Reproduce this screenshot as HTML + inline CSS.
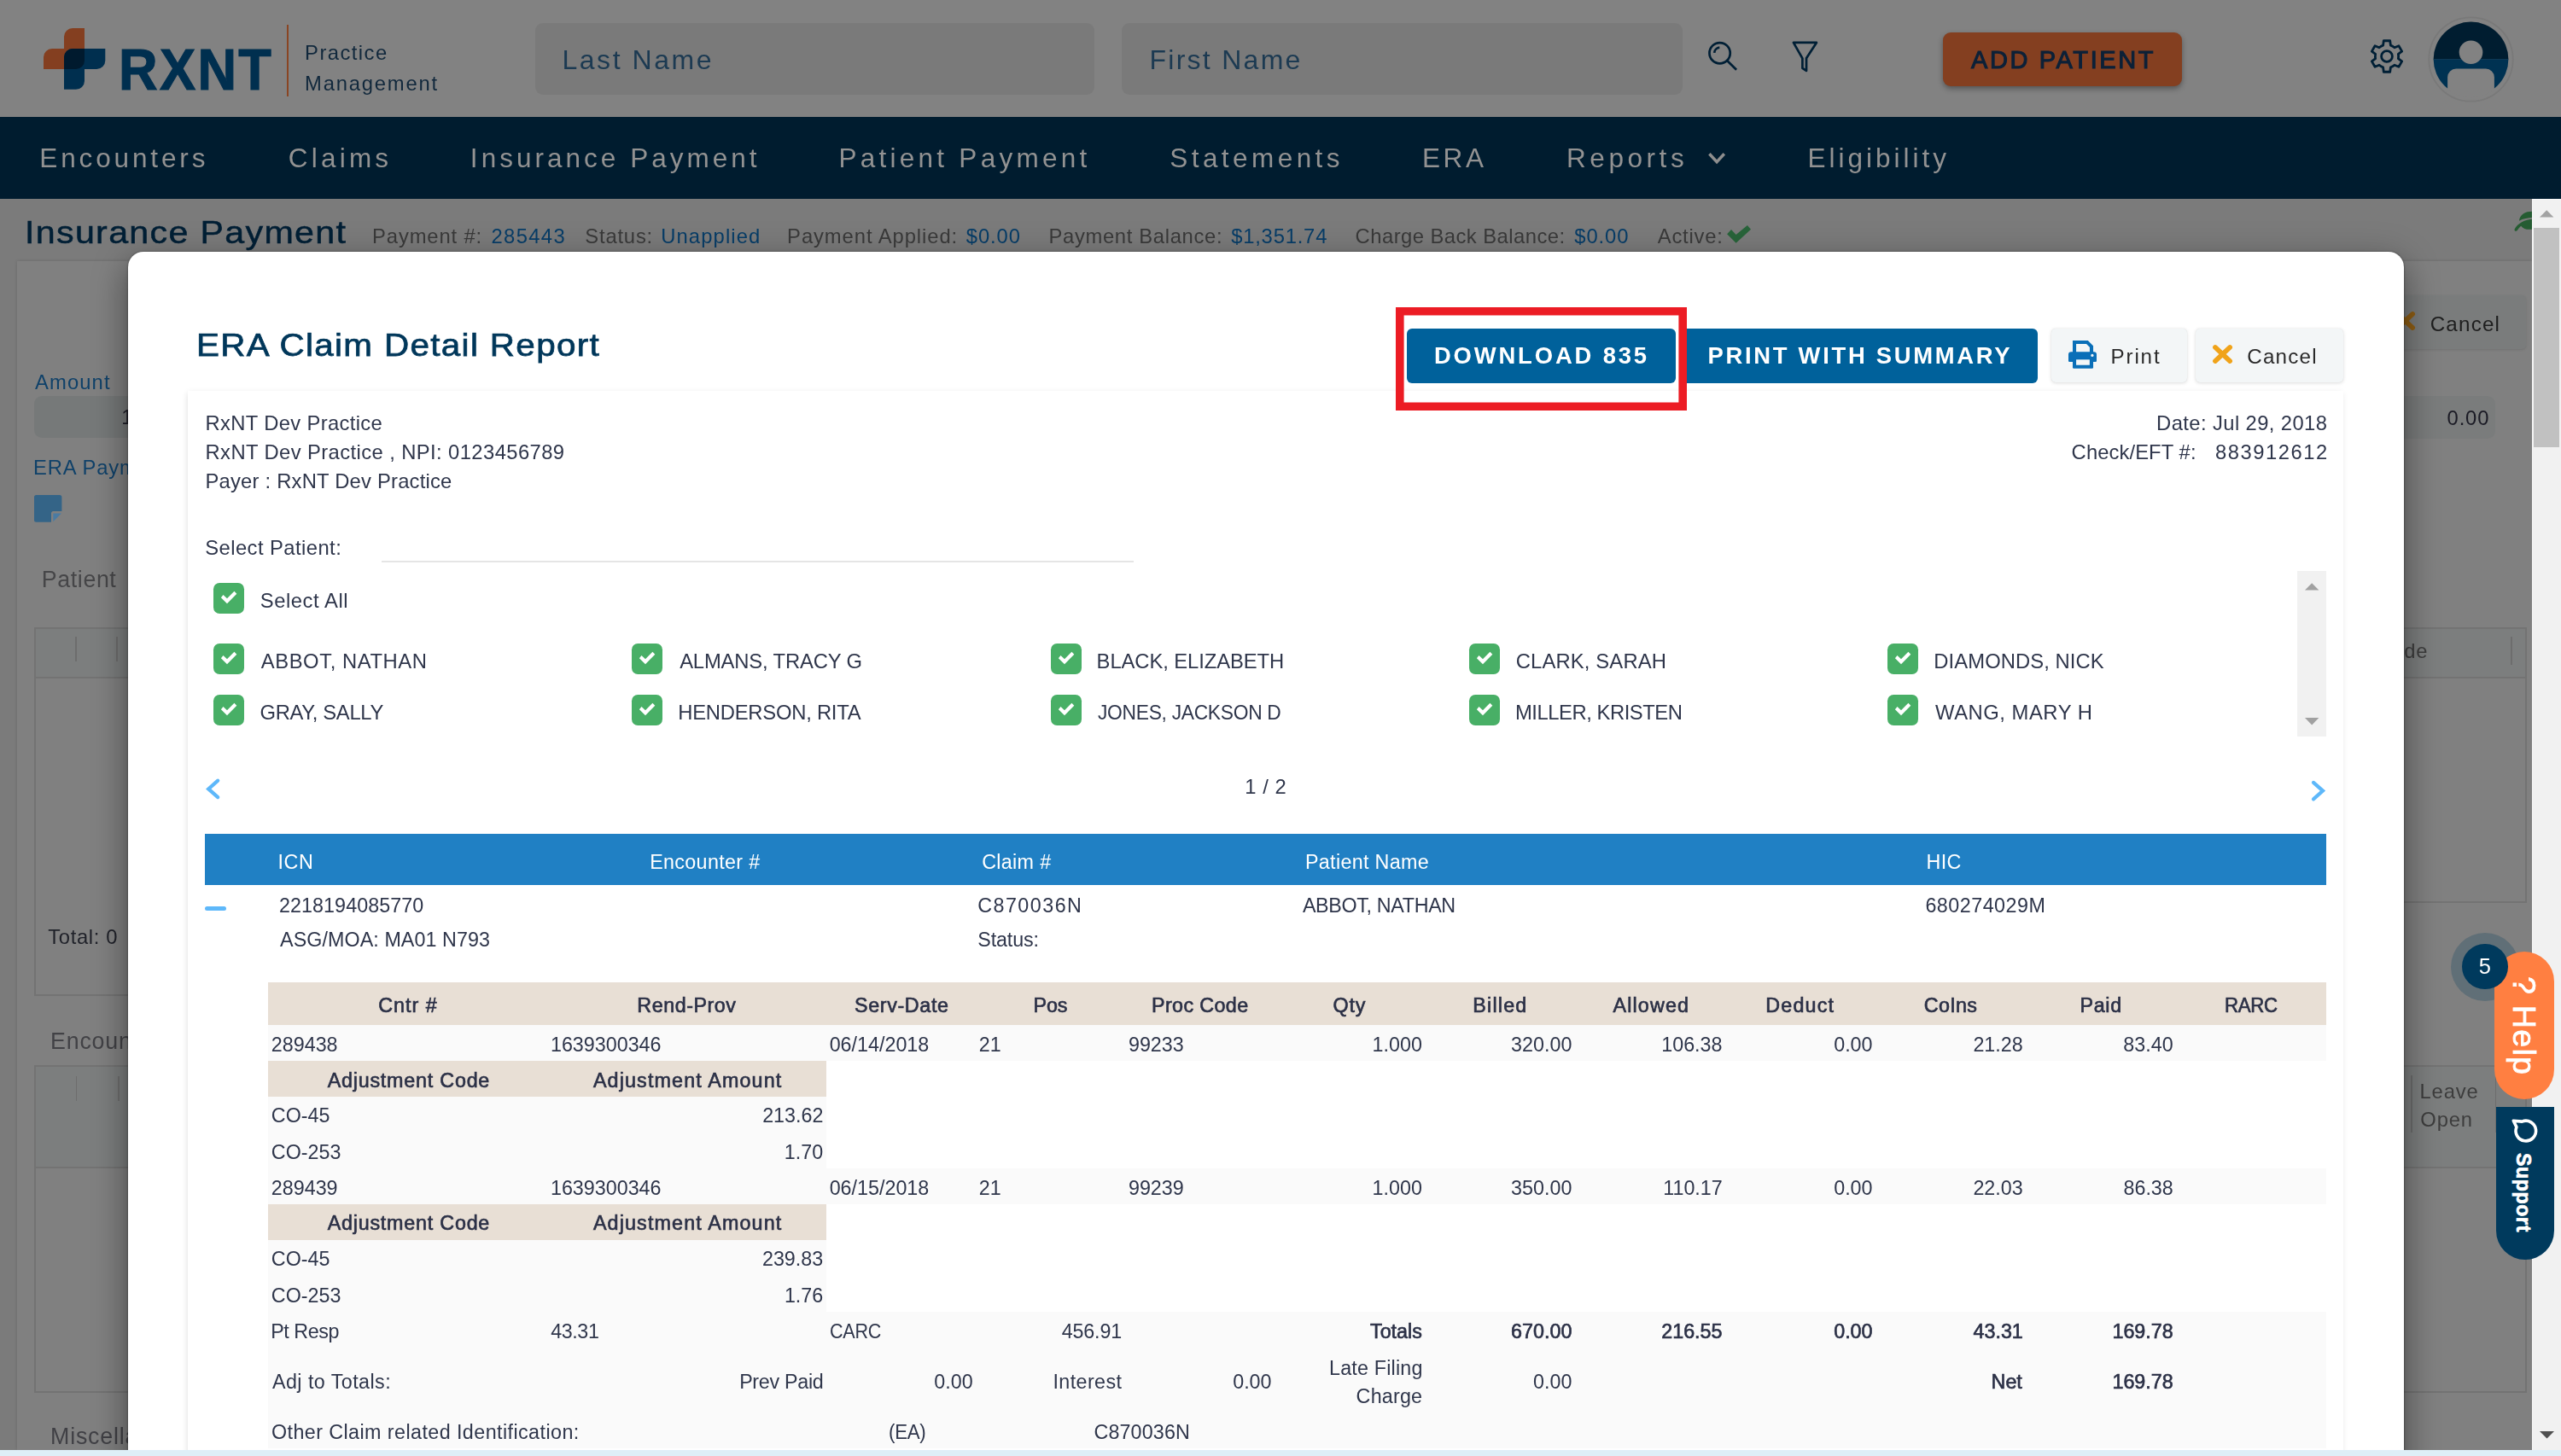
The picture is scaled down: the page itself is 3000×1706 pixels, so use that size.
<!DOCTYPE html>
<html lang="en"><head><meta charset="utf-8"><title>ERA Claim Detail Report</title>
<style>
html,body{margin:0;padding:0}
body{width:3000px;height:1706px;overflow:hidden;position:relative;background:#7d7d7d;font-family:"Liberation Sans",Arial,sans-serif}
.t{position:absolute;white-space:nowrap;display:block}
.r{position:absolute;display:block}
.L{position:absolute;left:0;top:0;width:3000px;height:1706px;will-change:transform;pointer-events:none}
svg{position:absolute;display:block;overflow:visible}
</style></head><body>
<div class="r" style="left:0px;top:0px;width:3000px;height:137px;background:#828282;"></div>
<svg style="left:51px;top:33px" width="73" height="72" viewBox="51 33 73 72">
<path d="M85 33 H99 V71 A10 10 0 0 1 89 81 H51 V67 A10 10 0 0 1 61 57 H75 V43 A10 10 0 0 1 85 33 Z" fill="#843f20"/>
<path d="M85 57 H123.3 V71 A10 10 0 0 1 113.3 81 H99 V95 A10 10 0 0 1 89 104.8 H75 V67 A10 10 0 0 1 85 57 Z" fill="#002f4f"/>
<path d="M85 57 H99 V71 A10 10 0 0 1 89 81 H75 V67 A10 10 0 0 1 85 57 Z" fill="#001a2e"/>
</svg>
<div class="r" style="left:336px;top:29px;width:2.4px;height:84px;background:#8a4523;"></div>
<div class="r" style="left:627px;top:26.5px;width:655px;height:84px;background:#7a7a7a;border-radius:9px;"></div>
<div class="r" style="left:1314px;top:26.5px;width:657px;height:84px;background:#7a7a7a;border-radius:9px;"></div>
<svg style="left:1998px;top:46px" width="42" height="42" viewBox="1998 46 42 42" fill="none" stroke="#001f35" stroke-width="2.7">
<circle cx="2014.6" cy="62.2" r="12.15"/><path d="M2023.4 71.3 L2034.1 81.7"/><path d="M2008.2 61.8 A6.6 6.6 0 0 1 2014.3 55.7"/></svg>
<svg style="left:2096px;top:46px" width="38" height="42" viewBox="2096 46 38 42" fill="none" stroke="#001f35" stroke-width="2.7" stroke-linejoin="round">
<path d="M2100.9 49.9 H2127.9 L2116 68.3 V83 L2111.4 79.8 V68.3 Z"/></svg>
<div class="r" style="left:2276px;top:38px;width:280px;height:62.7px;background:#843f20;border-radius:9px;box-shadow:0 3px 6px rgba(0,0,0,.35);"></div>
<svg style="left:2773px;top:43px" width="46" height="46" viewBox="2773 43 46 46" fill="none" stroke="#001f35" stroke-width="2.8" stroke-linejoin="round"><path d="M2791.59 53.13 L2792.30 47.77 L2799.70 47.77 L2800.41 53.13 A13.60 13.60 0 0 1 2804.94 55.75 L2809.94 53.69 L2813.63 60.09 L2809.35 63.38 A13.60 13.60 0 0 1 2809.35 68.62 L2813.63 71.91 L2809.94 78.31 L2804.94 76.25 A13.60 13.60 0 0 1 2800.41 78.87 L2799.70 84.23 L2792.30 84.23 L2791.59 78.87 A13.60 13.60 0 0 1 2787.06 76.25 L2782.06 78.31 L2778.37 71.91 L2782.65 68.62 A13.60 13.60 0 0 1 2782.65 63.38 L2778.37 60.09 L2782.06 53.69 L2787.06 55.75 A13.60 13.60 0 0 1 2791.59 53.13 Z"/><circle cx="2796" cy="66" r="6.4"/></svg>
<svg style="left:2843.7px;top:18.9px" width="101" height="101" viewBox="-50.5 -50.5 101 101">
<circle cx="0" cy="0" r="49.2" fill="none" stroke="#797979" stroke-width="1.8"/>
<clipPath id="avc"><circle cx="0" cy="0" r="44.7"/></clipPath>
<path d="M-43.9 0 A43.9 43.9 0 0 1 43.9 0 Z" fill="#001d30"/><path d="M-43.9 -0.3 H43.9 A43.9 43.9 0 0 1 -43.9 0 Z" fill="#003252"/>
<g clip-path="url(#avc)"><circle cx="0" cy="-8.3" r="13.8" fill="#828282"/><path d="M-27.4 50 V21 A10 10 0 0 1 -17.4 11 H17.4 A10 10 0 0 1 27.4 21 V50 Z" fill="#828282"/></g></svg>
<div class="r" style="left:0px;top:137px;width:3000px;height:96px;background:#001c2f;"></div>
<svg style="left:1998px;top:174px" width="28" height="24" viewBox="1998 174 28 24" fill="none" stroke="#8e8e8e" stroke-width="3.5"><path d="M2002.4 180.3 L2011.1 189.6 L2019.8 180.3"/></svg>
<div class="r" style="left:0px;top:233px;width:2966px;height:1466px;background:#7b7b7b;"></div>
<div class="r" style="left:20px;top:306px;width:2946px;height:1393px;background:#808080;box-shadow:0 0 4px rgba(0,0,0,.15);"></div>
<svg style="left:2020px;top:260px" width="34" height="28" viewBox="2020 260 34 28"><path d="M2023.1 274.2 L2028 269.1 L2033.6 275 L2046.9 264 L2051 268.7 L2033.6 284.8 Z" fill="#28643a"/></svg>
<svg style="left:2940px;top:244px" width="30" height="30" viewBox="2940 244 30 30" fill="#255c32"><path d="M2968 247.7 C2958 247 2951.5 251.5 2951 258.8 C2955.5 256.2 2961 255.2 2968 254.8 Z"/><path d="M2968 256.4 C2957 257.2 2949.5 261.5 2945.6 268.4 C2945 270.6 2947.6 271.6 2948.9 269.8 C2950 268 2951.3 266.3 2953.1 264.7 C2956 268.6 2961.5 269.6 2968 268.3 Z"/></svg>
<div class="r" style="left:39.8px;top:464px;width:360.2px;height:49.4px;background:#767979;border-radius:9px;"></div>
<svg style="left:39.8px;top:579.7px" width="32.4" height="31.8" viewBox="0 0 32.4 31.8"><path d="M2.5 0 H29.9 A2.5 2.5 0 0 1 32.4 2.5 V19 H22.5 A2.5 2.5 0 0 0 20 21.5 V31.8 H2.5 A2.5 2.5 0 0 1 0 29.3 V2.5 A2.5 2.5 0 0 1 2.5 0 Z" fill="#346487"/><path d="M22.3 21.6 H32 L22.3 31.3 Z" fill="#4a7ba3"/></svg>
<div class="r" style="left:40.3px;top:735px;width:359.7px;height:432.4px;background:transparent;border:2px solid #737373;box-sizing:border-box;"></div>
<div class="r" style="left:40.3px;top:735px;width:359.7px;height:60px;background:#7c7e7e;border:2px solid #737373;box-sizing:border-box;"></div>
<div class="r" style="left:88.4px;top:746px;width:1.6px;height:29px;background:#6d6d6d;"></div>
<div class="r" style="left:136.4px;top:746px;width:1.6px;height:29px;background:#6d6d6d;"></div>
<div class="r" style="left:40.3px;top:1247.8px;width:359.7px;height:384.2px;background:transparent;border:2px solid #737373;box-sizing:border-box;"></div>
<div class="r" style="left:40.3px;top:1247.8px;width:359.7px;height:121px;background:#7c7e7e;border:2px solid #737373;box-sizing:border-box;"></div>
<div class="r" style="left:88.8px;top:1260.7px;width:1.6px;height:28.9px;background:#6d6d6d;"></div>
<div class="r" style="left:138.2px;top:1260.7px;width:1.6px;height:28.9px;background:#6d6d6d;"></div>
<div class="r" style="left:2700px;top:346.4px;width:258.6px;height:62.6px;background:#7a7c7c;border-radius:5px;box-shadow:0 1px 3px rgba(0,0,0,.12);"></div>
<svg style="left:2803.5px;top:363.3px" width="28" height="26" viewBox="0 0 28 26" stroke="#8f5e14" stroke-width="5.6" stroke-linecap="round"><path d="M4.9 4.9 L22.2 21.1 M22.2 4.9 L4.9 21.1"/></svg>
<div class="r" style="left:2500px;top:464.3px;width:423px;height:49.3px;background:#7a7c7c;border-radius:9px;"></div>
<div class="r" style="left:2500px;top:735px;width:459.8px;height:322.6px;background:transparent;border:2px solid #737373;box-sizing:border-box;"></div>
<div class="r" style="left:2500px;top:735px;width:459.8px;height:60px;background:#7c7e7e;border:2px solid #737373;box-sizing:border-box;"></div>
<div class="r" style="left:2941px;top:746px;width:1.6px;height:33px;background:#6d6d6d;"></div>
<div class="r" style="left:2500px;top:1248.4px;width:459.8px;height:383.6px;background:transparent;border:2px solid #737373;box-sizing:border-box;"></div>
<div class="r" style="left:2500px;top:1248.4px;width:459.8px;height:120.4px;background:#7c7e7e;border:2px solid #737373;box-sizing:border-box;"></div>
<div class="r" style="left:2824.3px;top:1259.6px;width:1.6px;height:67.7px;background:#6d6d6d;"></div>
<div class="r" style="left:2922.6px;top:1259.6px;width:1.6px;height:67.7px;background:#6d6d6d;"></div>
<div class="L">
<span class="t" style="left:138.50px;top:47px;font-size:69px;line-height:69px;color:#002f4f;letter-spacing:2.553px;font-weight:700;transform:scaleX(0.9150);transform-origin:0 0;-webkit-text-stroke:1.2px #002f4f;">RXNT</span>
<span class="t" style="left:357.10px;top:50px;font-size:23.8px;line-height:23.8px;color:#11283c;letter-spacing:1.437px;">Practice</span>
<span class="t" style="left:357.10px;top:86px;font-size:23.8px;line-height:23.8px;color:#11283c;letter-spacing:1.794px;">Management</span>
<span class="t" style="left:658.44px;top:54px;font-size:32px;line-height:32px;color:#1c3a52;letter-spacing:2.535px;">Last Name</span>
<span class="t" style="left:1346.44px;top:54px;font-size:32px;line-height:32px;color:#1c3a52;letter-spacing:2.280px;">First Name</span>
<span class="t" style="left:2309.00px;top:56px;font-size:29px;line-height:29px;color:#0c2138;letter-spacing:2.609px;-webkit-text-stroke:1.1px #0c2138;">ADD PATIENT</span>
<span class="t" style="left:46.28px;top:170px;font-size:31.5px;line-height:31.5px;color:#929292;letter-spacing:3.870px;">Encounters</span>
<span class="t" style="left:337.73px;top:170px;font-size:31.5px;line-height:31.5px;color:#929292;letter-spacing:4.229px;">Claims</span>
<span class="t" style="left:550.87px;top:170px;font-size:31.5px;line-height:31.5px;color:#929292;letter-spacing:4.020px;">Insurance Payment</span>
<span class="t" style="left:982.48px;top:170px;font-size:31.5px;line-height:31.5px;color:#929292;letter-spacing:4.259px;">Patient Payment</span>
<span class="t" style="left:1370.28px;top:170px;font-size:31.5px;line-height:31.5px;color:#929292;letter-spacing:4.437px;">Statements</span>
<span class="t" style="left:1665.98px;top:170px;font-size:31.5px;line-height:31.5px;color:#929292;letter-spacing:3.644px;">ERA</span>
<span class="t" style="left:1835.08px;top:170px;font-size:31.5px;line-height:31.5px;color:#929292;letter-spacing:4.545px;">Reports</span>
<span class="t" style="left:2117.48px;top:170px;font-size:31.5px;line-height:31.5px;color:#929292;letter-spacing:3.998px;">Eligibility</span>
<span class="t" style="left:29.19px;top:254px;font-size:37.5px;line-height:37.5px;color:#001f35;letter-spacing:1.168px;transform:scaleX(1.1000);transform-origin:0 0;-webkit-text-stroke:0.5px #001f35;">Insurance Payment</span>
<span class="t" style="left:436.10px;top:265px;font-size:23.8px;line-height:23.8px;color:#3a3a3a;letter-spacing:0.860px;">Payment #:</span>
<span class="t" style="left:575.51px;top:265px;font-size:23.8px;line-height:23.8px;color:#073d68;letter-spacing:1.354px;">285443</span>
<span class="t" style="left:685.33px;top:265px;font-size:23.8px;line-height:23.8px;color:#3a3a3a;letter-spacing:0.799px;">Status:</span>
<span class="t" style="left:774.22px;top:265px;font-size:23.8px;line-height:23.8px;color:#073d68;letter-spacing:1.117px;">Unapplied</span>
<span class="t" style="left:922.10px;top:265px;font-size:23.8px;line-height:23.8px;color:#3a3a3a;letter-spacing:0.925px;">Payment Applied:</span>
<span class="t" style="left:1131.76px;top:265px;font-size:23.8px;line-height:23.8px;color:#073d68;letter-spacing:0.893px;">$0.00</span>
<span class="t" style="left:1228.50px;top:265px;font-size:23.8px;line-height:23.8px;color:#3a3a3a;letter-spacing:0.661px;">Payment Balance:</span>
<span class="t" style="left:1442.16px;top:265px;font-size:23.8px;line-height:23.8px;color:#073d68;letter-spacing:0.793px;">$1,351.74</span>
<span class="t" style="left:1587.61px;top:265px;font-size:23.8px;line-height:23.8px;color:#3a3a3a;letter-spacing:0.459px;">Charge Back Balance:</span>
<span class="t" style="left:1844.36px;top:265px;font-size:23.8px;line-height:23.8px;color:#073d68;letter-spacing:0.893px;">$0.00</span>
<span class="t" style="left:1941.80px;top:265px;font-size:23.8px;line-height:23.8px;color:#3a3a3a;letter-spacing:0.757px;">Active:</span>
<span class="t" style="left:41.00px;top:436px;font-size:23.8px;line-height:23.8px;color:#0f4169;letter-spacing:1.106px;">Amount</span>
<span class="t" style="left:142.22px;top:477px;font-size:23.8px;line-height:23.8px;color:#1b1b25;">1</span>
<span class="t" style="left:39.10px;top:536px;font-size:23.8px;line-height:23.8px;color:#0f4169;letter-spacing:0.800px;">ERA Payment</span>
<span class="t" style="left:48.86px;top:666px;font-size:26.8px;line-height:26.8px;color:#464648;letter-spacing:0.588px;">Patient</span>
<span class="t" style="left:56.32px;top:1086px;font-size:23.8px;line-height:23.8px;color:#1f2129;letter-spacing:0.622px;">Total: 0</span>
<span class="t" style="left:59.06px;top:1207px;font-size:26.8px;line-height:26.8px;color:#424246;letter-spacing:0.800px;">Encounter</span>
<span class="t" style="left:59.06px;top:1670px;font-size:26.8px;line-height:26.8px;color:#404045;letter-spacing:0.800px;">Miscellaneous</span>
<span class="t" style="left:2846.69px;top:368px;font-size:24.2px;line-height:24.2px;color:#1e1e1e;letter-spacing:1.204px;">Cancel</span>
<span class="t" style="left:2866.55px;top:478px;font-size:23.8px;line-height:23.8px;color:#1b1b25;letter-spacing:0.865px;">0.00</span>
<span class="t" style="left:2784.29px;top:751px;font-size:23.8px;line-height:23.8px;color:#3d3d3d;letter-spacing:0.800px;">Code</span>
<span class="t" style="left:2834.50px;top:1267px;font-size:23.8px;line-height:23.8px;color:#3d3d3d;letter-spacing:0.855px;">Leave</span>
<span class="t" style="left:2835.33px;top:1300px;font-size:23.8px;line-height:23.8px;color:#3d3d3d;letter-spacing:0.809px;">Open</span>
</div>
<div class="r" style="left:150px;top:294.5px;width:2666.2px;height:1465.5px;background:#ffffff;border-radius:18px 18px 0 0;box-shadow:0 0 2.5px rgba(0,0,0,.45),0 11px 15px -7px rgba(0,0,0,.3),0 24px 38px 3px rgba(0,0,0,.2),0 9px 40px 6px rgba(0,0,0,.2);"></div>
<div class="r" style="left:220px;top:457.6px;width:2525.4px;height:1302.4px;background:#ffffff;box-shadow:-1.5px 1.5px 7px rgba(0,0,0,.12);"></div>
<div class="r" style="left:1648.1px;top:384.8px;width:315.1px;height:64.1px;background:#00619b;border-radius:6px;"></div>
<div class="r" style="left:1968px;top:384.8px;width:419.3px;height:64.1px;background:#00619b;border-radius:6px;"></div>
<div class="r" style="left:1635.2px;top:360px;width:340.6px;height:120.6px;background:transparent;box-shadow:inset 0 0 0 9.6px #ec1c24;"></div>
<div class="r" style="left:2403.4px;top:385.2px;width:158.3px;height:62.8px;background:#f3f6f7;border-radius:5px;box-shadow:0 1px 4px rgba(0,0,0,.13),0 0 1px rgba(0,0,0,.12);"></div>
<div class="r" style="left:2572.4px;top:385.2px;width:172.8px;height:62.8px;background:#f3f6f7;border-radius:5px;box-shadow:0 1px 4px rgba(0,0,0,.13),0 0 1px rgba(0,0,0,.12);"></div>
<svg style="left:2423px;top:398.9px" width="33" height="33" viewBox="0 0 32.4 32.4"><path d="M0 16.2 A3.2 3.2 0 0 1 3.2 13 H29.2 A3.2 3.2 0 0 1 32.4 16.2 V23.4 A1.2 1.2 0 0 1 31.2 24.6 H1.2 A1.2 1.2 0 0 1 0 23.4 Z" fill="#0a6fb8"/><path d="M6.9 14 V2 H21.6 L26.5 6.9 V14" stroke="#0a6fb8" stroke-width="4" fill="none" stroke-linejoin="miter"/><rect x="4.9" y="21" width="23.6" height="11.2" rx="1.2" fill="#0a6fb8"/><rect x="8.9" y="21.9" width="15.5" height="6.3" fill="#f3f6f7"/><circle cx="27.4" cy="17.1" r="1.6" fill="#f3f6f7"/></svg>
<svg style="left:2590px;top:402px" width="28" height="26" viewBox="0 0 28 26" stroke="#f0a31a" stroke-width="5.6" stroke-linecap="round"><path d="M4.9 4.9 L22.2 21.1 M22.2 4.9 L4.9 21.1"/></svg>
<div class="r" style="left:447.2px;top:657px;width:880.8px;height:2px;background:#e5e5e5;"></div>
<svg style="left:250px;top:683px" width="36" height="36" viewBox="0 0 36 36"><rect width="36" height="36" rx="7.2" fill="#48af66"/><path d="M8.9 17.3 L11.5 14 L16 18.3 L24.4 9.8 L27.3 12.7 L16 24.3 Z" fill="#fff"/></svg>
<svg style="left:250px;top:754px" width="36" height="36" viewBox="0 0 36 36"><rect width="36" height="36" rx="7.2" fill="#48af66"/><path d="M8.9 17.3 L11.5 14 L16 18.3 L24.4 9.8 L27.3 12.7 L16 24.3 Z" fill="#fff"/></svg>
<svg style="left:740.35px;top:754px" width="36" height="36" viewBox="0 0 36 36"><rect width="36" height="36" rx="7.2" fill="#48af66"/><path d="M8.9 17.3 L11.5 14 L16 18.3 L24.4 9.8 L27.3 12.7 L16 24.3 Z" fill="#fff"/></svg>
<svg style="left:1230.7px;top:754px" width="36" height="36" viewBox="0 0 36 36"><rect width="36" height="36" rx="7.2" fill="#48af66"/><path d="M8.9 17.3 L11.5 14 L16 18.3 L24.4 9.8 L27.3 12.7 L16 24.3 Z" fill="#fff"/></svg>
<svg style="left:1721.05px;top:754px" width="36" height="36" viewBox="0 0 36 36"><rect width="36" height="36" rx="7.2" fill="#48af66"/><path d="M8.9 17.3 L11.5 14 L16 18.3 L24.4 9.8 L27.3 12.7 L16 24.3 Z" fill="#fff"/></svg>
<svg style="left:2211.4px;top:754px" width="36" height="36" viewBox="0 0 36 36"><rect width="36" height="36" rx="7.2" fill="#48af66"/><path d="M8.9 17.3 L11.5 14 L16 18.3 L24.4 9.8 L27.3 12.7 L16 24.3 Z" fill="#fff"/></svg>
<svg style="left:250px;top:814px" width="36" height="36" viewBox="0 0 36 36"><rect width="36" height="36" rx="7.2" fill="#48af66"/><path d="M8.9 17.3 L11.5 14 L16 18.3 L24.4 9.8 L27.3 12.7 L16 24.3 Z" fill="#fff"/></svg>
<svg style="left:740.35px;top:814px" width="36" height="36" viewBox="0 0 36 36"><rect width="36" height="36" rx="7.2" fill="#48af66"/><path d="M8.9 17.3 L11.5 14 L16 18.3 L24.4 9.8 L27.3 12.7 L16 24.3 Z" fill="#fff"/></svg>
<svg style="left:1230.7px;top:814px" width="36" height="36" viewBox="0 0 36 36"><rect width="36" height="36" rx="7.2" fill="#48af66"/><path d="M8.9 17.3 L11.5 14 L16 18.3 L24.4 9.8 L27.3 12.7 L16 24.3 Z" fill="#fff"/></svg>
<svg style="left:1721.05px;top:814px" width="36" height="36" viewBox="0 0 36 36"><rect width="36" height="36" rx="7.2" fill="#48af66"/><path d="M8.9 17.3 L11.5 14 L16 18.3 L24.4 9.8 L27.3 12.7 L16 24.3 Z" fill="#fff"/></svg>
<svg style="left:2211.4px;top:814px" width="36" height="36" viewBox="0 0 36 36"><rect width="36" height="36" rx="7.2" fill="#48af66"/><path d="M8.9 17.3 L11.5 14 L16 18.3 L24.4 9.8 L27.3 12.7 L16 24.3 Z" fill="#fff"/></svg>
<div class="r" style="left:2690.8px;top:669px;width:34px;height:193.8px;background:#f1f1f1;"></div>
<svg style="left:2699.8px;top:682.5px" width="16.4" height="8.6" viewBox="0 0 16.4 8.6"><path d="M0 8.6 L8.2 0.2 L16.4 8.6 Z" fill="#a1a1a1"/></svg>
<svg style="left:2699.8px;top:840.8px" width="16.4" height="8.6" viewBox="0 0 16.4 8.6"><path d="M0 0 L8.2 8.4 L16.4 0 Z" fill="#a1a1a1"/></svg>
<svg style="left:236px;top:908px" width="26" height="34" viewBox="236 908 26 34" fill="none" stroke="#5eb8fa" stroke-width="4.2" stroke-linecap="round" stroke-linejoin="miter"><path d="M255.2 914.7 L244.2 924.4 L255.2 934.1"/></svg>
<svg style="left:2702px;top:910px" width="26" height="34" viewBox="2702 910 26 34" fill="none" stroke="#5eb8fa" stroke-width="4.2" stroke-linecap="round" stroke-linejoin="miter"><path d="M2710 916.9 L2721 926.6 L2710 936.3"/></svg>
<div class="r" style="left:240px;top:977px;width:2485px;height:59.8px;background:#2080c4;"></div>
<div class="r" style="left:240.3px;top:1061.6px;width:24.7px;height:5.6px;background:#5eb8fa;border-radius:2.5px;"></div>
<div class="r" style="left:313.7px;top:1151px;width:2411.3px;height:49.9px;background:#e8dfd5;"></div>
<div class="r" style="left:313.7px;top:1200.9px;width:2411.3px;height:42.4px;background:#fafafa;"></div>
<div class="r" style="left:313.7px;top:1243.3px;width:654.5px;height:41.5px;background:#e8dfd5;"></div>
<div class="r" style="left:313.7px;top:1284.8px;width:654.5px;height:84.5px;background:#fafafa;"></div>
<div class="r" style="left:313.7px;top:1369.2px;width:2411.3px;height:42px;background:#fafafa;"></div>
<div class="r" style="left:313.7px;top:1411.2px;width:654.5px;height:41.5px;background:#e8dfd5;"></div>
<div class="r" style="left:313.7px;top:1452.7px;width:654.5px;height:84.5px;background:#fafafa;"></div>
<div class="r" style="left:313.7px;top:1537px;width:2411.3px;height:160.2px;background:#fafafa;"></div>
<div class="L">
<span class="t" style="left:230.37px;top:386px;font-size:37.4px;line-height:37.4px;color:#00375a;letter-spacing:1.248px;transform:scaleX(1.0800);transform-origin:0 0;-webkit-text-stroke:0.75px #00375a;">ERA Claim Detail Report</span>
<span class="t" style="left:1679.92px;top:403px;font-size:27.4px;line-height:27.4px;color:#ffffff;letter-spacing:2.870px;font-weight:700;">DOWNLOAD 835</span>
<span class="t" style="left:2000.52px;top:403px;font-size:27.4px;line-height:27.4px;color:#ffffff;letter-spacing:2.719px;font-weight:700;">PRINT WITH SUMMARY</span>
<span class="t" style="left:2472.56px;top:406px;font-size:24.2px;line-height:24.2px;color:#2a2a2a;letter-spacing:1.832px;">Print</span>
<span class="t" style="left:2632.29px;top:406px;font-size:24.2px;line-height:24.2px;color:#2a2a2a;letter-spacing:1.204px;">Cancel</span>
<span class="t" style="left:240.50px;top:484px;font-size:23.8px;line-height:23.8px;color:#2f364b;letter-spacing:0.341px;">RxNT Dev Practice</span>
<span class="t" style="left:240.50px;top:518px;font-size:23.8px;line-height:23.8px;color:#2f364b;letter-spacing:0.400px;">RxNT Dev Practice , NPI: 0123456789</span>
<span class="t" style="left:240.50px;top:552px;font-size:23.8px;line-height:23.8px;color:#2f364b;letter-spacing:0.206px;">Payer : RxNT Dev Practice</span>
<span class="t" style="left:2526.10px;top:484px;font-size:23.8px;line-height:23.8px;color:#2f364b;letter-spacing:0.395px;">Date: Jul 29, 2018</span>
<span class="t" style="left:2426.61px;top:518px;font-size:23.8px;line-height:23.8px;color:#2f364b;letter-spacing:0.081px;">Check/EFT #:</span>
<span class="t" style="left:2594.93px;top:518px;font-size:23.8px;line-height:23.8px;color:#2f364b;letter-spacing:1.518px;">883912612</span>
<span class="t" style="left:240.23px;top:630px;font-size:23.8px;line-height:23.8px;color:#2f364b;letter-spacing:0.437px;">Select Patient:</span>
<span class="t" style="left:304.73px;top:692px;font-size:23.8px;line-height:23.8px;color:#2f364b;letter-spacing:0.556px;">Select All</span>
<span class="t" style="left:305.80px;top:763px;font-size:23.8px;line-height:23.8px;color:#2f364b;letter-spacing:0.566px;">ABBOT, NATHAN</span>
<span class="t" style="left:796.15px;top:763px;font-size:23.8px;line-height:23.8px;color:#2f364b;letter-spacing:-0.151px;">ALMANS, TRACY G</span>
<span class="t" style="left:1284.60px;top:763px;font-size:23.8px;line-height:23.8px;color:#2f364b;letter-spacing:-0.084px;">BLACK, ELIZABETH</span>
<span class="t" style="left:1775.66px;top:763px;font-size:23.8px;line-height:23.8px;color:#2f364b;letter-spacing:0.156px;">CLARK, SARAH</span>
<span class="t" style="left:2265.30px;top:763px;font-size:23.8px;line-height:23.8px;color:#2f364b;letter-spacing:0.084px;">DIAMONDS, NICK</span>
<span class="t" style="left:304.61px;top:823px;font-size:23.8px;line-height:23.8px;color:#2f364b;letter-spacing:-0.349px;">GRAY, SALLY</span>
<span class="t" style="left:794.25px;top:823px;font-size:23.8px;line-height:23.8px;color:#2f364b;letter-spacing:-0.239px;">HENDERSON, RITA</span>
<span class="t" style="left:1286.16px;top:823px;font-size:23.8px;line-height:23.8px;color:#2f364b;letter-spacing:-0.300px;transform:scaleX(0.9579);transform-origin:0 0;">JONES, JACKSON D</span>
<span class="t" style="left:1774.95px;top:823px;font-size:23.8px;line-height:23.8px;color:#2f364b;letter-spacing:-0.449px;">MILLER, KRISTEN</span>
<span class="t" style="left:2267.08px;top:823px;font-size:23.8px;line-height:23.8px;color:#2f364b;letter-spacing:0.527px;">WANG, MARY H</span>
<span class="t" style="left:1458.21px;top:910px;font-size:23.8px;line-height:23.8px;color:#2f364b;letter-spacing:0.571px;">1 / 2</span>
<span class="t" style="left:325.50px;top:999px;font-size:23.3px;line-height:23.3px;color:#ffffff;letter-spacing:0.592px;">ICN</span>
<span class="t" style="left:761.14px;top:999px;font-size:23.3px;line-height:23.3px;color:#ffffff;letter-spacing:0.339px;">Encounter #</span>
<span class="t" style="left:1150.13px;top:999px;font-size:23.3px;line-height:23.3px;color:#ffffff;letter-spacing:0.332px;">Claim #</span>
<span class="t" style="left:1528.94px;top:999px;font-size:23.3px;line-height:23.3px;color:#ffffff;letter-spacing:0.329px;">Patient Name</span>
<span class="t" style="left:2256.44px;top:999px;font-size:23.3px;line-height:23.3px;color:#ffffff;letter-spacing:0.402px;">HIC</span>
<span class="t" style="left:326.94px;top:1050px;font-size:23.3px;line-height:23.3px;color:#2f364b;letter-spacing:0.077px;">2218194085770</span>
<span class="t" style="left:328.10px;top:1090px;font-size:23.3px;line-height:23.3px;color:#2f364b;letter-spacing:0.069px;">ASG/MOA: MA01 N793</span>
<span class="t" style="left:1145.24px;top:1050px;font-size:23.3px;line-height:23.3px;color:#2f364b;letter-spacing:1.465px;">C870036N</span>
<span class="t" style="left:1145.35px;top:1090px;font-size:23.3px;line-height:23.3px;color:#2f364b;letter-spacing:-0.153px;">Status:</span>
<span class="t" style="left:1525.90px;top:1050px;font-size:23.3px;line-height:23.3px;color:#2f364b;letter-spacing:-0.342px;">ABBOT, NATHAN</span>
<span class="t" style="left:2255.43px;top:1050px;font-size:23.3px;line-height:23.3px;color:#2f364b;letter-spacing:0.486px;">680274029M</span>
<span class="t" style="left:443.23px;top:1167px;font-size:23.3px;line-height:23.3px;color:#2b3046;letter-spacing:1.021px;-webkit-text-stroke:0.65px #2b3046;">Cntr #</span>
<span class="t" style="left:746.34px;top:1167px;font-size:23.3px;line-height:23.3px;color:#2b3046;letter-spacing:0.526px;-webkit-text-stroke:0.65px #2b3046;">Rend-Prov</span>
<span class="t" style="left:1001.05px;top:1167px;font-size:23.3px;line-height:23.3px;color:#2b3046;letter-spacing:0.631px;-webkit-text-stroke:0.65px #2b3046;">Serv-Date</span>
<span class="t" style="left:1210.54px;top:1167px;font-size:23.3px;line-height:23.3px;color:#2b3046;letter-spacing:-0.157px;-webkit-text-stroke:0.65px #2b3046;">Pos</span>
<span class="t" style="left:1348.99px;top:1167px;font-size:23.3px;line-height:23.3px;color:#2b3046;letter-spacing:0.390px;-webkit-text-stroke:0.65px #2b3046;">Proc Code</span>
<span class="t" style="left:1561.45px;top:1167px;font-size:23.3px;line-height:23.3px;color:#2b3046;letter-spacing:0.909px;-webkit-text-stroke:0.65px #2b3046;">Qty</span>
<span class="t" style="left:1725.34px;top:1167px;font-size:23.3px;line-height:23.3px;color:#2b3046;letter-spacing:1.202px;-webkit-text-stroke:0.65px #2b3046;">Billed</span>
<span class="t" style="left:1889.50px;top:1167px;font-size:23.3px;line-height:23.3px;color:#2b3046;letter-spacing:1.161px;-webkit-text-stroke:0.65px #2b3046;">Allowed</span>
<span class="t" style="left:2068.24px;top:1167px;font-size:23.3px;line-height:23.3px;color:#2b3046;letter-spacing:1.207px;-webkit-text-stroke:0.65px #2b3046;">Deduct</span>
<span class="t" style="left:2253.84px;top:1167px;font-size:23.3px;line-height:23.3px;color:#2b3046;letter-spacing:0.292px;-webkit-text-stroke:0.65px #2b3046;">CoIns</span>
<span class="t" style="left:2436.49px;top:1167px;font-size:23.3px;line-height:23.3px;color:#2b3046;letter-spacing:0.693px;-webkit-text-stroke:0.65px #2b3046;">Paid</span>
<span class="t" style="left:2605.97px;top:1167px;font-size:23.3px;line-height:23.3px;color:#2b3046;letter-spacing:-0.300px;transform:scaleX(0.9541);transform-origin:0 0;-webkit-text-stroke:0.65px #2b3046;">RARC</span>
<span class="t" style="left:317.83px;top:1213px;font-size:23.3px;line-height:23.3px;color:#2f364b;">289438</span>
<span class="t" style="left:644.95px;top:1213px;font-size:23.3px;line-height:23.3px;color:#2f364b;">1639300346</span>
<span class="t" style="left:971.67px;top:1213px;font-size:23.3px;line-height:23.3px;color:#2f364b;">06/14/2018</span>
<span class="t" style="left:1146.84px;top:1213px;font-size:23.3px;line-height:23.3px;color:#2f364b;">21</span>
<span class="t" style="left:1321.95px;top:1213px;font-size:23.3px;line-height:23.3px;color:#2f364b;">99233</span>
<span class="t" style="left:1607.57px;top:1213px;font-size:23.3px;line-height:23.3px;color:#2f364b;">1.000</span>
<span class="t" style="left:1770.12px;top:1213px;font-size:23.3px;line-height:23.3px;color:#2f364b;">320.00</span>
<span class="t" style="left:1946.23px;top:1213px;font-size:23.3px;line-height:23.3px;color:#2f364b;">106.38</span>
<span class="t" style="left:2148.20px;top:1213px;font-size:23.3px;line-height:23.3px;color:#2f364b;">0.00</span>
<span class="t" style="left:2311.38px;top:1213px;font-size:23.3px;line-height:23.3px;color:#2f364b;">21.28</span>
<span class="t" style="left:2487.37px;top:1213px;font-size:23.3px;line-height:23.3px;color:#2f364b;">83.40</span>
<span class="t" style="left:383.70px;top:1255px;font-size:23.3px;line-height:23.3px;color:#2b3046;letter-spacing:0.781px;-webkit-text-stroke:0.65px #2b3046;">Adjustment Code</span>
<span class="t" style="left:694.90px;top:1255px;font-size:23.3px;line-height:23.3px;color:#2b3046;letter-spacing:1.144px;-webkit-text-stroke:0.65px #2b3046;">Adjustment Amount</span>
<span class="t" style="left:317.83px;top:1296px;font-size:23.3px;line-height:23.3px;color:#2f364b;">CO-45</span>
<span class="t" style="left:893.17px;top:1296px;font-size:23.3px;line-height:23.3px;color:#2f364b;">213.62</span>
<span class="t" style="left:317.83px;top:1339px;font-size:23.3px;line-height:23.3px;color:#2f364b;">CO-253</span>
<span class="t" style="left:918.80px;top:1339px;font-size:23.3px;line-height:23.3px;color:#2f364b;">1.70</span>
<span class="t" style="left:317.83px;top:1381px;font-size:23.3px;line-height:23.3px;color:#2f364b;">289439</span>
<span class="t" style="left:644.95px;top:1381px;font-size:23.3px;line-height:23.3px;color:#2f364b;">1639300346</span>
<span class="t" style="left:971.67px;top:1381px;font-size:23.3px;line-height:23.3px;color:#2f364b;">06/15/2018</span>
<span class="t" style="left:1146.84px;top:1381px;font-size:23.3px;line-height:23.3px;color:#2f364b;">21</span>
<span class="t" style="left:1321.95px;top:1381px;font-size:23.3px;line-height:23.3px;color:#2f364b;">99239</span>
<span class="t" style="left:1607.57px;top:1381px;font-size:23.3px;line-height:23.3px;color:#2f364b;">1.000</span>
<span class="t" style="left:1770.12px;top:1381px;font-size:23.3px;line-height:23.3px;color:#2f364b;">350.00</span>
<span class="t" style="left:1948.21px;top:1381px;font-size:23.3px;line-height:23.3px;color:#2f364b;">110.17</span>
<span class="t" style="left:2148.20px;top:1381px;font-size:23.3px;line-height:23.3px;color:#2f364b;">0.00</span>
<span class="t" style="left:2311.38px;top:1381px;font-size:23.3px;line-height:23.3px;color:#2f364b;">22.03</span>
<span class="t" style="left:2487.48px;top:1381px;font-size:23.3px;line-height:23.3px;color:#2f364b;">86.38</span>
<span class="t" style="left:383.70px;top:1422px;font-size:23.3px;line-height:23.3px;color:#2b3046;letter-spacing:0.781px;-webkit-text-stroke:0.65px #2b3046;">Adjustment Code</span>
<span class="t" style="left:694.90px;top:1422px;font-size:23.3px;line-height:23.3px;color:#2b3046;letter-spacing:1.144px;-webkit-text-stroke:0.65px #2b3046;">Adjustment Amount</span>
<span class="t" style="left:317.83px;top:1464px;font-size:23.3px;line-height:23.3px;color:#2f364b;">CO-45</span>
<span class="t" style="left:892.93px;top:1464px;font-size:23.3px;line-height:23.3px;color:#2f364b;">239.83</span>
<span class="t" style="left:317.83px;top:1507px;font-size:23.3px;line-height:23.3px;color:#2f364b;">CO-253</span>
<span class="t" style="left:918.91px;top:1507px;font-size:23.3px;line-height:23.3px;color:#2f364b;">1.76</span>
<span class="t" style="left:317.14px;top:1549px;font-size:23.3px;line-height:23.3px;color:#2f364b;letter-spacing:-0.423px;">Pt Resp</span>
<span class="t" style="left:645.13px;top:1549px;font-size:23.3px;line-height:23.3px;color:#2f364b;letter-spacing:-0.384px;">43.31</span>
<span class="t" style="left:971.52px;top:1549px;font-size:23.3px;line-height:23.3px;color:#2f364b;letter-spacing:-0.300px;transform:scaleX(0.9261);transform-origin:0 0;">CARC</span>
<span class="t" style="left:1243.73px;top:1549px;font-size:23.3px;line-height:23.3px;color:#2f364b;letter-spacing:-0.157px;">456.91</span>
<span class="t" style="left:1605.00px;top:1549px;font-size:23.3px;line-height:23.3px;color:#2b3046;-webkit-text-stroke:0.65px #2b3046;">Totals</span>
<span class="t" style="left:1770.12px;top:1549px;font-size:23.3px;line-height:23.3px;color:#2b3046;-webkit-text-stroke:0.65px #2b3046;">670.00</span>
<span class="t" style="left:1946.23px;top:1549px;font-size:23.3px;line-height:23.3px;color:#2b3046;-webkit-text-stroke:0.65px #2b3046;">216.55</span>
<span class="t" style="left:2148.20px;top:1549px;font-size:23.3px;line-height:23.3px;color:#2b3046;-webkit-text-stroke:0.65px #2b3046;">0.00</span>
<span class="t" style="left:2311.50px;top:1549px;font-size:23.3px;line-height:23.3px;color:#2b3046;-webkit-text-stroke:0.65px #2b3046;">43.31</span>
<span class="t" style="left:2474.43px;top:1549px;font-size:23.3px;line-height:23.3px;color:#2b3046;-webkit-text-stroke:0.65px #2b3046;">169.78</span>
<span class="t" style="left:319.00px;top:1608px;font-size:23.3px;line-height:23.3px;color:#2f364b;letter-spacing:0.436px;">Adj to Totals:</span>
<span class="t" style="left:866.14px;top:1608px;font-size:23.3px;line-height:23.3px;color:#2f364b;letter-spacing:-0.291px;">Prev Paid</span>
<span class="t" style="left:1094.30px;top:1608px;font-size:23.3px;line-height:23.3px;color:#2f364b;">0.00</span>
<span class="t" style="left:1233.40px;top:1608px;font-size:23.3px;line-height:23.3px;color:#2f364b;letter-spacing:0.418px;">Interest</span>
<span class="t" style="left:1444.20px;top:1608px;font-size:23.3px;line-height:23.3px;color:#2f364b;">0.00</span>
<span class="t" style="left:1556.98px;top:1592px;font-size:23.3px;line-height:23.3px;color:#2f364b;letter-spacing:0.200px;">Late Filing</span>
<span class="t" style="left:1588.62px;top:1625px;font-size:23.3px;line-height:23.3px;color:#2f364b;letter-spacing:0.200px;">Charge</span>
<span class="t" style="left:1796.10px;top:1608px;font-size:23.3px;line-height:23.3px;color:#2f364b;">0.00</span>
<span class="t" style="left:2332.58px;top:1608px;font-size:23.3px;line-height:23.3px;color:#2b3046;-webkit-text-stroke:0.65px #2b3046;">Net</span>
<span class="t" style="left:2474.43px;top:1608px;font-size:23.3px;line-height:23.3px;color:#2b3046;-webkit-text-stroke:0.65px #2b3046;">169.78</span>
<span class="t" style="left:317.95px;top:1667px;font-size:23.3px;line-height:23.3px;color:#2f364b;letter-spacing:0.429px;">Other Claim related Identification:</span>
<span class="t" style="left:1040.66px;top:1667px;font-size:23.3px;line-height:23.3px;color:#2f364b;letter-spacing:-0.300px;transform:scaleX(0.9582);transform-origin:0 0;">(EA)</span>
<span class="t" style="left:1281.43px;top:1667px;font-size:23.3px;line-height:23.3px;color:#2f364b;letter-spacing:0.151px;">C870036N</span>
</div>
<div class="r" style="left:2966px;top:233px;width:34px;height:1466px;background:#f1f1f1;box-shadow:inset 1px 1px 0 #f9f9f9;"></div>
<div class="r" style="left:2968.3px;top:267.2px;width:29.4px;height:256.4px;background:#c1c1c1;"></div>
<svg style="left:2974.8px;top:246.4px" width="16.4" height="8.6" viewBox="0 0 16.4 8.6"><path d="M0 8.6 L8.2 0.2 L16.4 8.6 Z" fill="#a3a3a3"/></svg>
<svg style="left:2974.6px;top:1676.5px" width="17" height="9" viewBox="0 0 17 9"><path d="M0 0 L8.5 8.5 L17 0 Z" fill="#505050"/></svg>
<div class="r" style="left:0px;top:1698.6px;width:3000px;height:7.4px;background:#deeff7;"></div>
<div class="r" style="left:2870.8px;top:1092.5px;width:80px;height:80px;border-radius:50%;background:rgba(0,58,93,.25)"></div>
<div class="r" style="left:2922.3px;top:1115.3px;width:69.5px;height:172.9px;background:#ff7f41;border-radius:35px;"></div>
<div class="r" style="left:2883.9px;top:1105.6px;width:53.8px;height:53.8px;background:#003a5d;border-radius:50%;"></div>
<span class="t" style="left:2944.3px;top:1143.5px;width:0;height:0;"><span style="position:absolute;left:0;top:0;transform-origin:0 0;transform:rotate(90deg) translateY(-100%);display:block;font-size:37.5px;line-height:37.5px;height:37.5px;color:#fff;letter-spacing:1.3px;white-space:nowrap;-webkit-text-stroke:0.8px #fff"><span style="position:relative;top:6.5px">? Help</span></span></span>
<div class="r" style="left:2923.7px;top:1297.2px;width:68.6px;height:179.3px;background:#003a5d;border-radius:0 0 35px 35px;"></div>
<span class="t" style="left:2948.2px;top:1350.5px;width:0;height:0;"><span style="position:absolute;left:0;top:0;transform-origin:0 0;transform:rotate(90deg) translateY(-100%);display:block;font-size:23px;line-height:23px;height:23px;color:#fff;font-weight:700;letter-spacing:0.7px;white-space:nowrap;-webkit-text-stroke:0.7px #fff"><span style="position:relative;top:4px">Support</span></span></span>
<svg style="left:2938px;top:1306px" width="40" height="38" viewBox="2938 1306 40 38" fill="none" stroke="#fff" stroke-width="3.6" stroke-linejoin="round"><path d="M2954.4 1314.1 A11.8 11.8 0 1 1 2947.9 1320.6 L2944.3 1313.2 Z"/></svg>
<div class="L">
<span class="t" style="left:2903.72px;top:1120px;font-size:25.5px;line-height:25.5px;color:#ffffff;">5</span>
</div>
</body></html>
